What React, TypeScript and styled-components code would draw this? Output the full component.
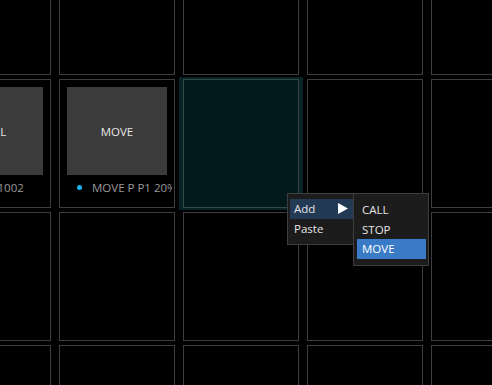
import React from "react";
import styled, { createGlobalStyle } from "styled-components";

const GlobalStyle = createGlobalStyle`
    html, body {
        margin: 0;
        padding: 0;
        background: #000;
    }
    body {
        font-family: "Open Sans", "Noto Sans", sans-serif;
    }
`

const Viewport = styled.div`
    position: relative;
    width: 492px;
    height: 385px;
    overflow: hidden;
    background: #000;
`

const Board = styled.div`
    display: grid;
    grid-template-columns: repeat(5, 124px);
    grid-auto-rows: 133px;
    margin: -56px 0 0 -69px;
`

const Slot = styled.div<{ $selected?: boolean }>`
    padding: 2px 4px;
    background: ${p => p.$selected ? '#072325' : 'transparent'};
`

const Cell = styled.div<{ $selected?: boolean }>`
    box-sizing: border-box;
    height: 100%;
    padding: 7px;
    border: 1px solid ${p => p.$selected ? '#34484a' : '#3d3d44'};
    background: ${p => p.$selected ? '#031a1d' : '#000'};
    display: flex;
    flex-direction: column;
    overflow: hidden;
`

const Tile = styled.div`
    flex: 0 0 88px;
    background: #3b3b3b;
    color: #e6e6e6;
    font-size: 11.5px;
    display: flex;
    align-items: center;
    justify-content: center;
`

const Label = styled.div`
    height: 25px;
    display: flex;
    align-items: center;
    gap: 10px;
    padding-left: 10px;
    margin-right: -5px;
    overflow: hidden;
    color: #9a9a9a;
    font-size: 11.5px;
    white-space: nowrap;
`

const Dot = styled.span`
    flex: 0 0 5px;
    height: 5px;
    border-radius: 50%;
    background: #14b4f2;
`

const Menu = styled.div`
    position: absolute;
    left: 287px;
    top: 193px;
    box-sizing: border-box;
    width: 70px;
    padding: 5px 2px 6px 2px;
    background: #1c1c1c;
    border: 1px solid #3e3e3e;
`

const SubMenu = styled.div`
    position: absolute;
    left: 65px;
    top: -1px;
    box-sizing: border-box;
    width: 76px;
    padding: 6px 2px 6px 3px;
    background: #1c1c1c;
    border: 1px solid #3e3e3e;
`

const Item = styled.div<{ $active?: 'dim' | 'bright' }>`
    height: 19.5px;
    display: flex;
    align-items: center;
    justify-content: space-between;
    padding: 0 6px 0 4px;
    font-size: 11.5px;
    color: ${p => p.$active === 'bright' ? '#fff' : '#e4e4e4'};
    background: ${p => p.$active === 'bright' ? '#3a7bc8' : p.$active === 'dim' ? '#233a55' : 'transparent'};
`

const SubItem = styled(Item)`
    padding-left: 5px;
`

type Card = { title: string, label: string }

const rows: (Card | null | 'selected')[][] = [
    [null, null, null, null, null],
    [{ title: 'CALL', label: 'CALL  1002' }, { title: 'MOVE', label: 'MOVE P P1 20%' }, 'selected', null, null],
    [null, null, null, null, null],
    [null, null, null, null, null],
]

export default function App() {
    return (
        <Viewport>
            <GlobalStyle />
            <Board>
                {rows.map((row, r) => row.map((c, i) => (
                    <Slot key={`${r}-${i}`} $selected={c === 'selected'}>
                        <Cell $selected={c === 'selected'}>
                            {c && c !== 'selected' && (
                                <>
                                    <Tile>{c.title}</Tile>
                                    <Label><Dot />{c.label}</Label>
                                </>
                            )}
                        </Cell>
                    </Slot>
                )))}
            </Board>
            <Menu>
                <Item $active='dim'>
                    Add
                    <svg width="10" height="11" viewBox="0 0 10 11"><polygon points="0,0 10,5.5 0,11" fill="#fff" /></svg>
                </Item>
                <Item>Paste</Item>
                <SubMenu>
                    <SubItem>CALL</SubItem>
                    <SubItem>STOP</SubItem>
                    <SubItem $active='bright'>MOVE</SubItem>
                </SubMenu>
            </Menu>
        </Viewport>
    )
}
